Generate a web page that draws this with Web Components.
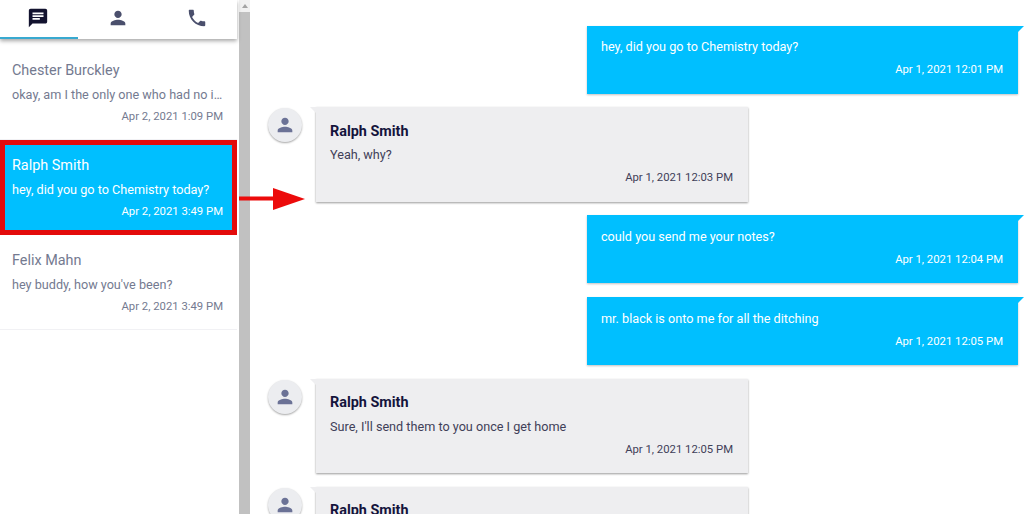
<!DOCTYPE html>
<html>
<head>
<meta charset="utf-8">
<title>Chat</title>
<style>
  html, body { margin: 0; height: 100%; overflow: hidden; background: #fff; }
  body { font-family: Roboto, "Liberation Sans", sans-serif; }
</style>
</head>
<body>
<chat-app>
  <chat-sidebar slot="side">
    <chat-item name="Chester Burckley" preview="okay, am I the only one who had no idea about the test" time="Apr 2, 2021 1:09 PM"></chat-item>
    <chat-item selected name="Ralph Smith" preview="hey, did you go to Chemistry today?" time="Apr 2, 2021 3:49 PM"></chat-item>
    <chat-item name="Felix Mahn" preview="hey buddy, how you've been?" time="Apr 2, 2021 3:49 PM"></chat-item>
  </chat-sidebar>
  <chat-bubble mine time="Apr 1, 2021 12:01 PM">hey, did you go to Chemistry today?</chat-bubble>
  <chat-bubble name="Ralph Smith" time="Apr 1, 2021 12:03 PM">Yeah, why?</chat-bubble>
  <chat-bubble mine time="Apr 1, 2021 12:04 PM">could you send me your notes?</chat-bubble>
  <chat-bubble mine time="Apr 1, 2021 12:05 PM">mr. black is onto me for all the ditching</chat-bubble>
  <chat-bubble name="Ralph Smith" time="Apr 1, 2021 12:05 PM">Sure, I'll send them to you once I get home</chat-bubble>
  <chat-bubble name="Ralph Smith" time="Apr 1, 2021 12:06 PM">Thanks</chat-bubble>
</chat-app>

<script>
const ICONS = {
  chat: "M20 2H4c-1.1 0-1.99.9-1.99 2L2 22l4-4h14c1.1 0 2-.9 2-2V4c0-1.1-.9-2-2-2zM6 9h12v2H6V9zm8 5H6v-2h8v2zm4-6H6V6h12v2z",
  person: "M12 12c2.21 0 4-1.79 4-4s-1.79-4-4-4-4 1.79-4 4 1.79 4 4 4zm0 2c-2.67 0-8 1.34-8 4v2h16v-2c0-2.66-5.33-4-8-4z",
  phone: "M6.62 10.79c1.44 2.83 3.76 5.14 6.59 6.59l2.2-2.2c.27-.27.67-.36 1.02-.24 1.12.37 2.33.57 3.57.57.55 0 1 .45 1 1V20c0 .55-.45 1-1 1-9.39 0-17-7.61-17-17 0-.55.45-1 1-1h3.5c.55 0 1 .45 1 1 0 1.25.2 2.45.57 3.57.11.35.03.74-.25 1.02l-2.2 2.2z"
};

class ChatApp extends HTMLElement {
  constructor() {
    super();
    this.shadowDOM = this.attachShadow({ mode: "open" });
    this.shadowDOM.innerHTML = `
    <style>
      :host { display: flex; height: 514px; position: relative; overflow: hidden; }
      .side { flex: none; width: 237px; }
      .scrollbar { flex: none; width: 11px; margin-left: 2px; background: #c1c1c1; display: flex; flex-direction: column; }
      .arrow-up { height: 12px; background: #f1f1f1; display: flex; justify-content: center; padding-top: 4px; box-sizing: border-box; }
      .arrow-up i { width: 0; height: 0; border: 3px solid transparent; border-top: 0; border-bottom: 4px solid #a3a3a3; }
      .messages { flex: 1; min-width: 0; padding: 25.8px 0 0 18px; display: flex; flex-direction: column; gap: 13.6px; }
      .annotation { position: absolute; left: 238px; top: 186px; }
    </style>
    <div class="side"><slot name="side"></slot></div>
    <div class="scrollbar"><div class="arrow-up"><i></i></div></div>
    <div class="messages"><slot></slot></div>
    <svg class="annotation" width="70" height="26" viewBox="0 0 70 26">
      <rect x="1" y="10.5" width="36" height="4" fill="#ec0b0b"/>
      <path d="M35 2 L67 13 L35 24 Z" fill="#ec0b0b"/>
    </svg>`;
  }
}

class ChatSidebar extends HTMLElement {
  constructor() {
    super();
    this.shadowDOM = this.attachShadow({ mode: "open" });
    const tab = (icon, color) => `<div class="tab"><svg width="22" height="22" viewBox="0 0 24 24"><path fill="${color}" d="${ICONS[icon]}"/></svg></div>`;
    this.shadowDOM.innerHTML = `
    <style>
      :host { display: block; }
      .tabs { display: grid; grid-template-columns: 78px 79px 80px; height: 39px; box-shadow: 0 2px 4px rgba(0,0,0,.35); position: relative; z-index: 1; background: #fff; }
      .tab { display: flex; justify-content: center; padding-top: 7px; box-sizing: border-box; }
      .tab:first-child { border-bottom: 2px solid #38a9d0; padding-right: 2px; }
      .list { display: flex; flex-direction: column; padding-top: 6px; }
    </style>
    <div class="tabs">
      ${tab("chat", "#13132f")}
      ${tab("person", "#4a4f6c")}
      ${tab("phone", "#4a4f6c")}
    </div>
    <div class="list"><slot></slot></div>`;
  }
}

class ChatItem extends HTMLElement {
  constructor() {
    super();
    this.shadowDOM = this.attachShadow({ mode: "open" });
  }

  connectedCallback() {
    this.shadowDOM.innerHTML = `
    <style>
      :host { display: block; box-sizing: border-box; height: 95px; padding: 17px 14px 0 12px; color: #747a90; border-bottom: 1px solid #f1f1f4; }
      :host([selected]) { background: #00bfff; color: #fff; border: 5px solid #e30b0b; padding: 12px 9px 0 7px; }
      .name { font-size: 14.4px; line-height: 18px; }
      .preview { font-size: 12.65px; line-height: 15px; margin-top: 6.5px; white-space: nowrap; overflow: hidden; text-overflow: ellipsis; }
      .time { font-size: 11.3px; line-height: 13px; margin-top: 8px; text-align: right; }
    </style>
    <div class="name">${this.getAttribute("name")}</div>
    <div class="preview">${this.getAttribute("preview")}</div>
    <div class="time">${this.getAttribute("time")}</div>`;
  }
}

class ChatBubble extends HTMLElement {
  constructor() {
    super();
    this.shadowDOM = this.attachShadow({ mode: "open" });
  }

  connectedCallback() {
    const name = this.getAttribute("name");
    const avatar = this.hasAttribute("mine") ? "" : `
      <div class="avatar"><svg width="22" height="22" viewBox="0 0 24 24"><path fill="#6b7296" d="${ICONS.person}"/></svg></div>`;
    this.shadowDOM.innerHTML = `
    <style>
      :host { display: flex; flex: none; align-items: flex-start; gap: 14px; }
      :host([mine]) { justify-content: flex-end; padding-right: 6px; }
      .avatar { flex: none; width: 34px; height: 34px; margin-top: 1px; border-radius: 50%; background: #ecedf0; box-shadow: 0 1px 2px rgba(0,0,0,.35); display: flex; align-items: center; justify-content: center; }
      .bubble { position: relative; box-sizing: border-box; width: 432px; padding: 15.5px 15px 17.5px 14px; background: #eeeef0; color: #3f4058; box-shadow: 0 1px 2px rgba(0,0,0,.4); }
      .bubble::before { content: ""; position: absolute; top: 0; left: -6px; border-top: 6px solid #eeeef0; border-left: 6px solid transparent; }
      :host([mine]) .bubble { width: 431px; padding: 13.5px 15px 17.5px 14px; background: #00bfff; color: #fff; box-shadow: 0 1px 2px rgba(0,0,0,.25); }
      :host([mine]) .bubble::before { left: auto; right: -6px; border-top-color: #00bfff; border-left: 0; border-right: 6px solid transparent; }
      .name { font-size: 14.4px; font-weight: 700; line-height: 17px; color: #14143c; margin-bottom: 7.5px; }
      .text { font-size: 12.65px; line-height: 15px; }
      .time { font-size: 11.3px; line-height: 13px; margin-top: 9px; text-align: right; }
    </style>
    ${avatar}
    <div class="bubble">
      ${name ? `<div class="name">${name}</div>` : ""}
      <div class="text"><slot></slot></div>
      <div class="time">${this.getAttribute("time")}</div>
    </div>`;
  }
}

customElements.define("chat-app", ChatApp);
customElements.define("chat-sidebar", ChatSidebar);
customElements.define("chat-item", ChatItem);
customElements.define("chat-bubble", ChatBubble);
</script>
</body>
</html>
